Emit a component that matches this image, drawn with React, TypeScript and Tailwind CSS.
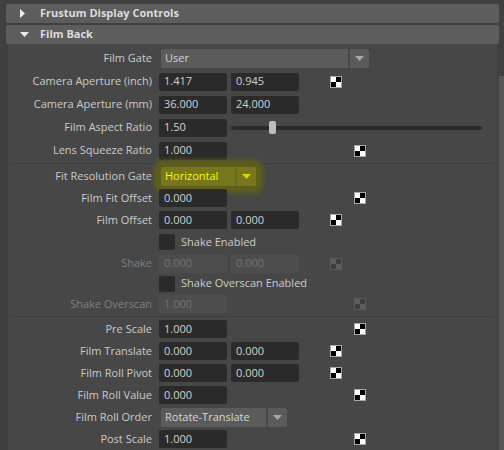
import React from 'react';

const font = { fontFamily: '"Open Sans", "Noto Sans", sans-serif' };

const Checker = ({ off }: { off?: boolean }) => (
  <div
    className={`grid h-[12px] w-[12px] grid-cols-2 grid-rows-2 border ${
      off ? 'border-[#5a5a5a]' : 'border-[#a8a8a8]'
    }`}
  >
    <div className={off ? 'bg-[#5c5c5c]' : 'bg-white'} />
    <div className={off ? 'bg-[#3e3e3e]' : 'bg-black'} />
    <div className={off ? 'bg-[#3e3e3e]' : 'bg-black'} />
    <div className={off ? 'bg-[#5c5c5c]' : 'bg-white'} />
  </div>
);

const Field = ({ value, off }: { value: string; off?: boolean }) => (
  <div
    className={`flex h-[18px] w-[68px] items-center rounded-[2px] pl-[5px] text-[11px] ${
      off ? 'bg-[#4d4d4d] text-[#737373]' : 'bg-[#2b2b2b] text-[#d2d2d2]'
    }`}
  >
    {value}
  </div>
);

const Label = ({ text, off }: { text: string; off?: boolean }) => (
  <div
    className={`w-[144px] shrink-0 text-right text-[11px] ${
      off ? 'text-[#7f7f7f]' : 'text-[#cbcbcb]'
    }`}
  >
    {text}
  </div>
);

const Arrow = ({ color }: { color: string }) => (
  <svg width="9" height="5" viewBox="0 0 9 5">
    <polygon points="0,0 9,0 4.5,5" fill={color} />
  </svg>
);

type RowProps = {
  label: string;
  values: string[];
  checker?: boolean;
  off?: boolean;
  h?: string;
};

const Row = ({ label, values, checker = true, off, h = 'h-[22px]' }: RowProps) => (
  <div className={`flex items-center ${h}`}>
    <Label text={label} off={off} />
    <div className="ml-[7px] flex items-center gap-[4px]">
      {values.map((v, i) => (
        <Field key={i} value={v} off={off} />
      ))}
    </div>
    {checker && (
      <div className={values.length === 2 ? 'ml-[31px]' : 'ml-[127px]'}>
        <Checker off={off} />
      </div>
    )}
  </div>
);

const Dropdown = ({
  value,
  width,
  highlight,
}: {
  value: string;
  width: string;
  highlight?: boolean;
}) => (
  <div
    className={`ml-[9px] flex h-[19px] items-stretch gap-[2px] ${width} ${
      highlight ? 'rounded-[3px] bg-[#6a6a1a] shadow-[0_0_5px_7px_rgba(98,98,22,0.92)]' : ''
    }`}
  >
    <div
      className={`flex flex-1 items-center rounded-l-[2px] pl-[4px] text-[11px] ${
        highlight ? 'bg-[#76761f] text-[#fbfb00]' : 'bg-[#5b5b5b] text-[#d6d6d6]'
      }`}
    >
      {value}
    </div>
    <div
      className={`flex w-[19px] items-center justify-center rounded-r-[2px] ${
        highlight ? 'bg-[#76761f]' : 'bg-[#5b5b5b]'
      }`}
    >
      <Arrow color={highlight ? '#d6d600' : '#a9a9a9'} />
    </div>
  </div>
);

const CheckRow = ({ text, h }: { text: string; h: string }) => (
  <div className={`flex items-center ${h}`}>
    <div className="w-[144px] shrink-0" />
    <div className="ml-[7px] h-[16px] w-[16px] rounded-[2px] bg-[#2b2b2b]" />
    <div className="ml-[6px] text-[11px] text-[#cbcbcb]">{text}</div>
  </div>
);

const Separator = () => <div className="mx-[2px] my-[1px] h-px bg-[#3e3e3e]" />;

const Header = ({ title, open }: { title: string; open?: boolean }) => (
  <div className="flex h-[20px] items-center rounded-[2px] bg-[#5d5d5d]">
    <div className="flex w-[34px] justify-center pl-[2px]">
      {open ? (
        <svg width="9" height="5" viewBox="0 0 9 5">
          <polygon points="0,0 9,0 4.5,5" fill="#ececec" />
        </svg>
      ) : (
        <svg width="5" height="9" viewBox="0 0 5 9" className="-ml-[4px]">
          <polygon points="0,0 5,4.5 0,9" fill="#ececec" />
        </svg>
      )}
    </div>
    <div className="text-[11px] font-bold text-[#dcdcdc]">{title}</div>
  </div>
);

export default function App() {
  return (
    <div className="flex h-[450px] w-[504px] overflow-hidden bg-[#404040]" style={font}>
      <div className="flex flex-1 flex-col pl-[6px] pt-[4px]">
        <Header title="Frustum Display Controls" />
        <div className="h-[2px]" />
        <Header title="Film Back" open />
        <div className="mx-[2px] flex-1 bg-[#474747] pt-[3px]">
          <div className="flex h-[23px] items-center">
            <Label text="Film Gate" />
            <Dropdown value="User" width="w-[208px]" />
          </div>
          <Row label="Camera Aperture (inch)" values={['1.417', '0.945']} h="h-[23px]" />
          <Row label="Camera Aperture (mm)" values={['36.000', '24.000']} checker={false} h="h-[23px]" />
          <div className="flex h-[23px] items-center">
            <Label text="Film Aspect Ratio" />
            <div className="ml-[7px]">
              <Field value="1.50" />
            </div>
            <div className="relative ml-[4px] flex h-[14px] w-[251px] items-center">
              <div className="h-[4px] w-full rounded-full bg-[#2b2b2b]" />
              <div className="absolute left-[38px] top-0 h-[13px] w-[7px] rounded-[2px] bg-[#bdbdbd]" />
            </div>
          </div>
          <Row label="Lens Squeeze Ratio" values={['1.000']} h="h-[23px]" />
          <Separator />
          <div className="flex h-[22px] items-center">
            <Label text="Fit Resolution Gate" />
            <Dropdown value="Horizontal" width="w-[95px]" highlight />
          </div>
          <Row label="Film Fit Offset" values={['0.000']} />
          <Row label="Film Offset" values={['0.000', '0.000']} />
          <CheckRow text="Shake Enabled" h="h-[22px]" />
          <Row label="Shake" values={['0.000', '0.000']} off h="h-[21px]" />
          <CheckRow text="Shake Overscan Enabled" h="h-[19px]" />
          <Row label="Shake Overscan" values={['1.000']} off />
          <Separator />
          <Row label="Pre Scale" values={['1.000']} />
          <Row label="Film Translate" values={['0.000', '0.000']} />
          <Row label="Film Roll Pivot" values={['0.000', '0.000']} />
          <Row label="Film Roll Value" values={['0.000']} />
          <div className="flex h-[22px] items-center">
            <Label text="Film Roll Order" />
            <Dropdown value="Rotate-Translate" width="w-[126px]" />
          </div>
          <Row label="Post Scale" values={['1.000']} />
        </div>
      </div>
      <div className="flex w-[5px] flex-col">
        <div className="h-[76px] bg-[#404040]" />
        <div className="flex-1 bg-[#565656]" />
      </div>
    </div>
  );
}
